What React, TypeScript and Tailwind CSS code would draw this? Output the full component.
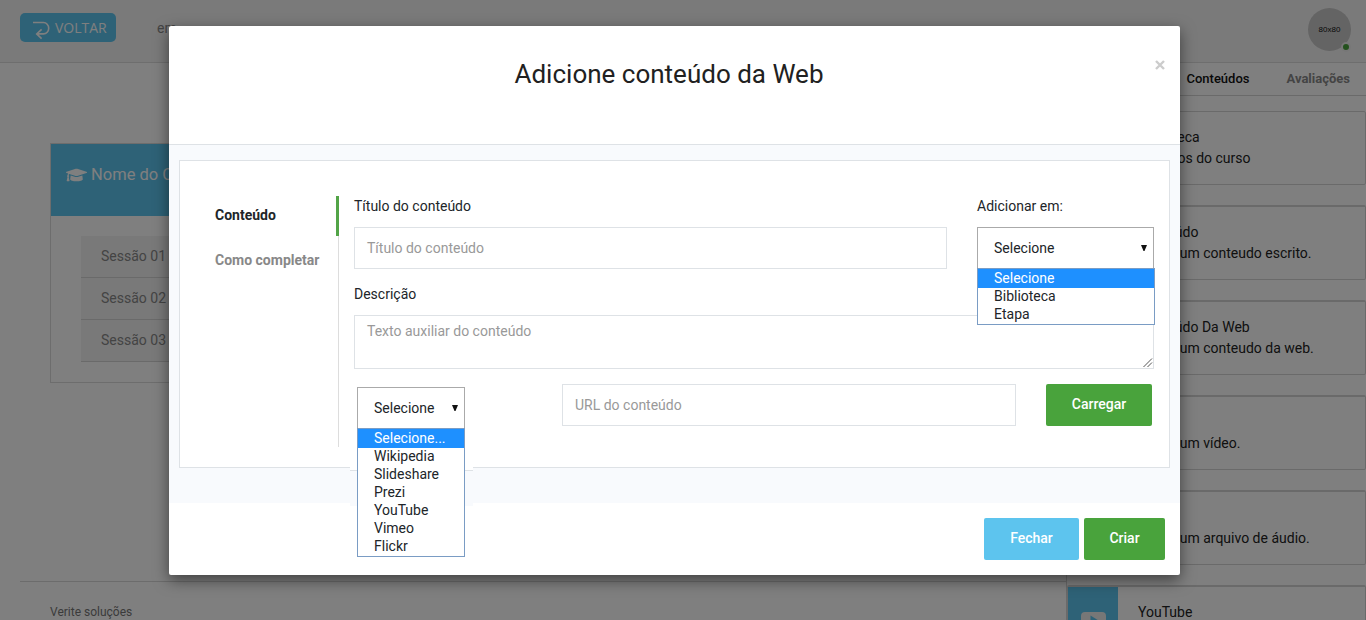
import React from "react";
import { FaGraduationCap } from "react-icons/fa";

const cards = [
  { title: "Biblioteca", text: "Arquivos do curso" },
  { title: "Conteúdo", text: "Insere um conteudo escrito." },
  { title: "Conteúdo Da Web", text: "Insere um conteudo da web." },
  { title: "Vídeo", text: "Insere um vídeo." },
  { title: "Áudio", text: "Insere um arquivo de áudio." },
  { title: "YouTube", text: "" },
];

function Caret() {
  return (
    <svg width="6" height="6" viewBox="0 0 6 6" className="shrink-0">
      <path d="M0 0H6L3.5 6H2.5Z" fill="#111" />
    </svg>
  );
}

function Options({ items, className }: { items: string[]; className: string }) {
  return (
    <ul className={"absolute z-10 border border-[#7a9cc4] bg-white " + className}>
      {items.map((o, i) => (
        <li
          key={o}
          className={
            i === 0
              ? "h-[19px] bg-[#1e90ff] pl-4 leading-[19px] text-white"
              : "h-[18px] pl-4 leading-[16px] text-[#212529]"
          }
        >
          {o}
        </li>
      ))}
    </ul>
  );
}

function Page() {
  return (
    <div className="flex h-[620px] flex-col overflow-hidden bg-white">
      <header className="flex h-[63px] shrink-0 items-start border-b border-[#dcdcdc] bg-[#f5f5f5] pl-5 pr-[15px]">
        <div className="mt-[13px] flex h-[29px] w-[96px] items-center rounded-[5px] bg-[#5dc4ee] pl-[13px] font-['Open_Sans',sans-serif] text-[14px] text-white">
          <svg width="17" height="19" viewBox="0 0 17 19" className="mt-[5px]" fill="none" stroke="#fff" strokeWidth="1.6">
            <path d="M0 1.5H10.5A5.2 5.7 0 0 1 10.5 12.9H4M8.6 8.3L3.7 12.9L8.6 17.6" />
          </svg>
          <span className="ml-[5px]">VOLTAR</span>
        </div>
        <span className="ml-[41px] mt-[18px] text-[#888]">em</span>
        <div className="relative ml-auto mt-2 flex h-[43px] w-[43px] items-center justify-center rounded-full bg-[#c8c8c8] font-['Liberation_Sans',sans-serif] text-[8px] text-[#111]">
          80x80
          <span className="absolute right-0 bottom-[-1px] h-[10px] w-[10px] rounded-full border-2 border-[#eee] bg-[#49a33c]" />
        </div>
      </header>
      <div className="flex min-h-0 flex-1">
        <main className="flex w-[1066px] shrink-0 flex-col pl-5">
          <section className="ml-[30px] mt-20 h-[240px] w-[900px] border border-[#dadada]">
            <div className="flex h-[72px] items-start bg-[#5dc4ee] pl-[15px] pt-[19px] text-[16.5px] text-white">
              <FaGraduationCap className="mr-[4px] mt-[3px] h-[18px] w-[21px]" />
              Nome do Curso
            </div>
            <ul className="ml-[30px] mt-[20px] w-[800px]">
              {["Sessão 01", "Sessão 02", "Sessão 03"].map((s) => (
                <li key={s} className="h-[42px] border-b border-[#d5d5d5] bg-[#f2f2f2] pl-5 leading-[40px] text-[#888]">
                  {s}
                </li>
              ))}
            </ul>
          </section>
          <footer className="mt-auto h-[39px] border-t border-[#d8d8d8] pl-[30px] pt-[20px] text-[12px] leading-[21px] text-[#777]">
            Verite soluções
          </footer>
        </main>
        <aside className="flex w-[300px] flex-col border-l border-[#d5d5d5]">
          <div className="flex h-[33px] shrink-0 items-start justify-end gap-[37px] border-b border-[#d5d5d5] pr-[16px] pt-[5px] text-[13px] leading-[21px]">
            <span className="font-medium text-[#111]">Conteúdos</span>
            <span className="font-bold text-[#888]">Avaliações</span>
          </div>
          <div className="mt-[14px] flex flex-col gap-5">
            {cards.map((c) => (
              <div
                key={c.title}
                className="flex h-[75px] shrink-0 rounded-[2px] border border-t-2 border-[#d5d5d5] text-[#222] first:mt-px first:h-[74px] first:border-t"
              >
                <div className="flex w-[50px] justify-center bg-[#5dc4ee] pt-[25px]">
                  <svg width="25" height="18" viewBox="0 0 25 18">
                    <rect width="25" height="18" rx="4" fill="#eee" />
                    <path d="M9.5 3.5L17.5 8.5L9.5 13.5Z" fill="#5dc4ee" />
                  </svg>
                </div>
                <div className="whitespace-nowrap pl-5 pt-[15px] leading-[21px]">
                  <p>{c.title}</p>
                  {c.text && <p>{c.text}</p>}
                </div>
              </div>
            ))}
          </div>
        </aside>
      </div>
    </div>
  );
}

function Modal() {
  return (
    <div className="absolute inset-0 bg-black/50 pl-[169px] pt-[26px]">
      <div className="flex h-[549px] w-[1011px] flex-col rounded-[2px] bg-white shadow-[0_5px_15px_rgba(0,0,0,0.5)]">
        <div className="relative flex h-[119px] shrink-0 justify-center border-b border-[#dee2e6] pr-[11px] pt-[30px]">
          <h1 className="text-[26px] leading-[36px] text-[#212121]">Adicione conteúdo da Web</h1>
          <svg width="10" height="10" viewBox="0 0 10 10" className="absolute right-[15px] top-[34px]" stroke="#ccc" strokeWidth="2.4">
            <path d="M1 1L9 9M9 1L1 9" />
          </svg>
        </div>
        <div className="h-[358px] shrink-0 bg-[#f8fafd] px-[10px] pt-[15px]">
          <div className="flex h-[308px] border border-[#dee2e6] bg-white pt-[35px]">
            <nav className="h-[251px] w-[159px] shrink-0 border-r border-[#ddd] pl-[35px] font-bold">
              <div className="relative -mr-px h-10 border-r-[3px] border-[#52a447] leading-[38px] text-[#212529]">Conteúdo</div>
              <div className="pt-[13px] leading-[22px] text-[#888]">Como completar</div>
            </nav>
            <div className="ml-[15px] w-[800px] text-[#212529]">
              <div className="flex gap-[30px]">
                <div className="w-[593px]">
                  <p className="mb-[10px] leading-[21px]">Título do conteúdo</p>
                  <div className="h-[42px] border border-[#dee2e6] pl-3 leading-[40px] text-[#999]">Título do conteúdo</div>
                </div>
                <div className="relative w-[177px]">
                  <p className="mb-[10px] leading-[21px]">Adicionar em:</p>
                  <div className="flex h-[42px] items-center justify-between border border-[#aaa] pl-4 pr-[6px]">
                    Selecione
                    <Caret />
                  </div>
                  <Options items={["Selecione", "Biblioteca", "Etapa"]} className="left-0 top-[72px] w-[178px]" />
                </div>
              </div>
              <p className="mb-[10px] mt-[15px] leading-[21px]">Descrição</p>
              <div className="flex h-[54px] justify-between border border-[#dee2e6] pl-3 pt-[5px] leading-[21px] text-[#999]">
                Texto auxiliar do conteúdo
                <svg width="10" height="10" viewBox="0 0 10 10" className="self-end" stroke="#555" strokeWidth="1">
                  <path d="M0.5 9L9 0.5M4.5 9L9 4.5" />
                </svg>
              </div>
              <div className="mt-[15px] flex">
                <div className="relative ml-[3px] mt-[3px] w-[108px]">
                  <div className="absolute -left-[7px] top-[80px] h-[39px] w-[123px] bg-[#f8fafd]">
                    <div className="h-[4px] border-b border-[#dee2e6] bg-white" />
                  </div>
                  <div className="flex h-[42px] items-center justify-between border border-[#aaa] bg-white pl-4 pr-[6px]">
                    Selecione
                    <Caret />
                  </div>
                  <Options
                    items={["Selecione...", "Wikipedia", "Slideshare", "Prezi", "YouTube", "Vimeo", "Flickr"]}
                    className="left-0 top-[41px] w-[108px]"
                  />
                </div>
                <div className="ml-[97px] h-[42px] w-[454px] border border-[#dee2e6] pl-3 leading-[40px] text-[#999]">URL do conteúdo</div>
                <div className="ml-[30px] h-[42px] w-[106px] rounded-[2px] bg-[#49a33c] text-center font-medium leading-[41px] text-white">
                  Carregar
                </div>
              </div>
            </div>
          </div>
        </div>
        <div className="flex justify-end gap-[5px] pr-[15px] pt-[15px] text-center font-medium leading-[41px] text-white">
          <div className="h-[42px] w-[95px] rounded-[2px] bg-[#5dc4ee]">Fechar</div>
          <div className="h-[42px] w-[81px] rounded-[2px] bg-[#49a33c]">Criar</div>
        </div>
      </div>
    </div>
  );
}

export default function App() {
  return (
    <div className="relative h-[620px] w-[1366px] overflow-hidden font-['Roboto',sans-serif] text-[14px]">
      <Page />
      <Modal />
    </div>
  );
}
